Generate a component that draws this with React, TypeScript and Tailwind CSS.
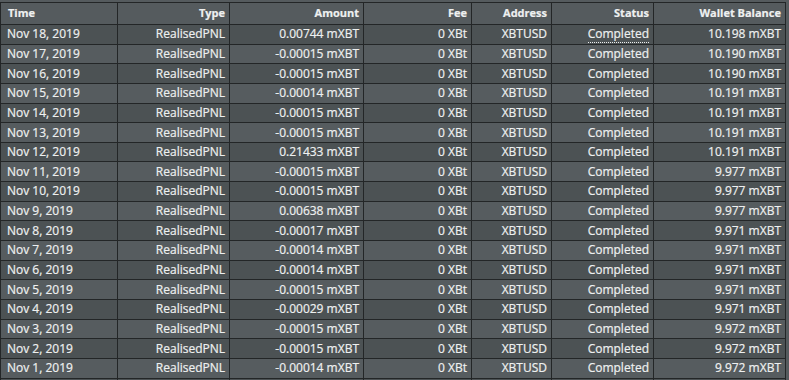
const rows = [
  { time: 'Nov 18, 2019', amount: '0.00744 mXBT', balance: '10.198 mXBT' },
  { time: 'Nov 17, 2019', amount: '-0.00015 mXBT', balance: '10.190 mXBT' },
  { time: 'Nov 16, 2019', amount: '-0.00015 mXBT', balance: '10.190 mXBT' },
  { time: 'Nov 15, 2019', amount: '-0.00014 mXBT', balance: '10.191 mXBT' },
  { time: 'Nov 14, 2019', amount: '-0.00015 mXBT', balance: '10.191 mXBT' },
  { time: 'Nov 13, 2019', amount: '-0.00015 mXBT', balance: '10.191 mXBT' },
  { time: 'Nov 12, 2019', amount: '0.21433 mXBT', balance: '10.191 mXBT' },
  { time: 'Nov 11, 2019', amount: '-0.00015 mXBT', balance: '9.977 mXBT' },
  { time: 'Nov 10, 2019', amount: '-0.00015 mXBT', balance: '9.977 mXBT' },
  { time: 'Nov 9, 2019', amount: '0.00638 mXBT', balance: '9.977 mXBT' },
  { time: 'Nov 8, 2019', amount: '-0.00017 mXBT', balance: '9.971 mXBT' },
  { time: 'Nov 7, 2019', amount: '-0.00014 mXBT', balance: '9.971 mXBT' },
  { time: 'Nov 6, 2019', amount: '-0.00014 mXBT', balance: '9.971 mXBT' },
  { time: 'Nov 5, 2019', amount: '-0.00015 mXBT', balance: '9.971 mXBT' },
  { time: 'Nov 4, 2019', amount: '-0.00029 mXBT', balance: '9.971 mXBT' },
  { time: 'Nov 3, 2019', amount: '-0.00015 mXBT', balance: '9.972 mXBT' },
  { time: 'Nov 2, 2019', amount: '-0.00015 mXBT', balance: '9.972 mXBT' },
  { time: 'Nov 1, 2019', amount: '-0.00014 mXBT', balance: '9.972 mXBT' },
];

const cell = 'shrink-0 border-r border-[#232627] flex items-center justify-end pr-[4px]';

export default function App() {
  return (
    <div className="w-[789px] h-[380px] overflow-hidden bg-[#555b5e] pt-[2px] text-[12px] text-[#eef0f0] [-webkit-text-stroke:0.2px_#eef0f0]"
      style={{ fontFamily: '"Open Sans", "Liberation Sans", sans-serif' }}>
      <div className="w-[786px] border-t border-l border-[#232627]">
        <div className="flex h-[22px] border-b border-[#232627] bg-[#555b5e] font-bold text-[11px]">
          <div className={`${cell} w-[117px] !justify-start pl-[7px]`}>Time</div>
          <div className={`${cell} w-[112px]`}>Type</div>
          <div className={`${cell} w-[134px]`}>Amount</div>
          <div className={`${cell} w-[108px]`}>Fee</div>
          <div className={`${cell} w-[80px]`}>Address</div>
          <div className={`${cell} w-[102px]`}>Status</div>
          <div className={`${cell} w-[132px]`}>Wallet Balance</div>
        </div>
        {[...rows, rows[rows.length - 1]].map((r, i) => (
          <div key={i}
            className={`flex h-[19.65px] border-b border-[#232627] ${i % 2 === 0 ? 'bg-[#4c5254]' : 'bg-[#565c5f]'}`}>
            <div className={`${cell} w-[117px] !justify-start pl-[6px]`}>{i < rows.length ? r.time : ''}</div>
            <div className={`${cell} w-[112px]`}>{i < rows.length ? 'RealisedPNL' : ''}</div>
            <div className={`${cell} w-[134px]`}>{i < rows.length ? r.amount : ''}</div>
            <div className={`${cell} w-[108px]`}>{i < rows.length ? '0 XBt' : ''}</div>
            <div className={`${cell} w-[80px]`}>{i < rows.length ? 'XBTUSD' : ''}</div>
            <div className={`${cell} w-[102px]`}>
              {i < rows.length && (
                <span className={i === 0 ? 'border-b border-dotted border-[#eef0f0] leading-[14px] pb-[1px] mt-[2px]' : ''}>Completed</span>
              )}
            </div>
            <div className={`${cell} w-[132px]`}>{i < rows.length ? r.balance : ''}</div>
          </div>
        ))}
      </div>
    </div>
  );
}
